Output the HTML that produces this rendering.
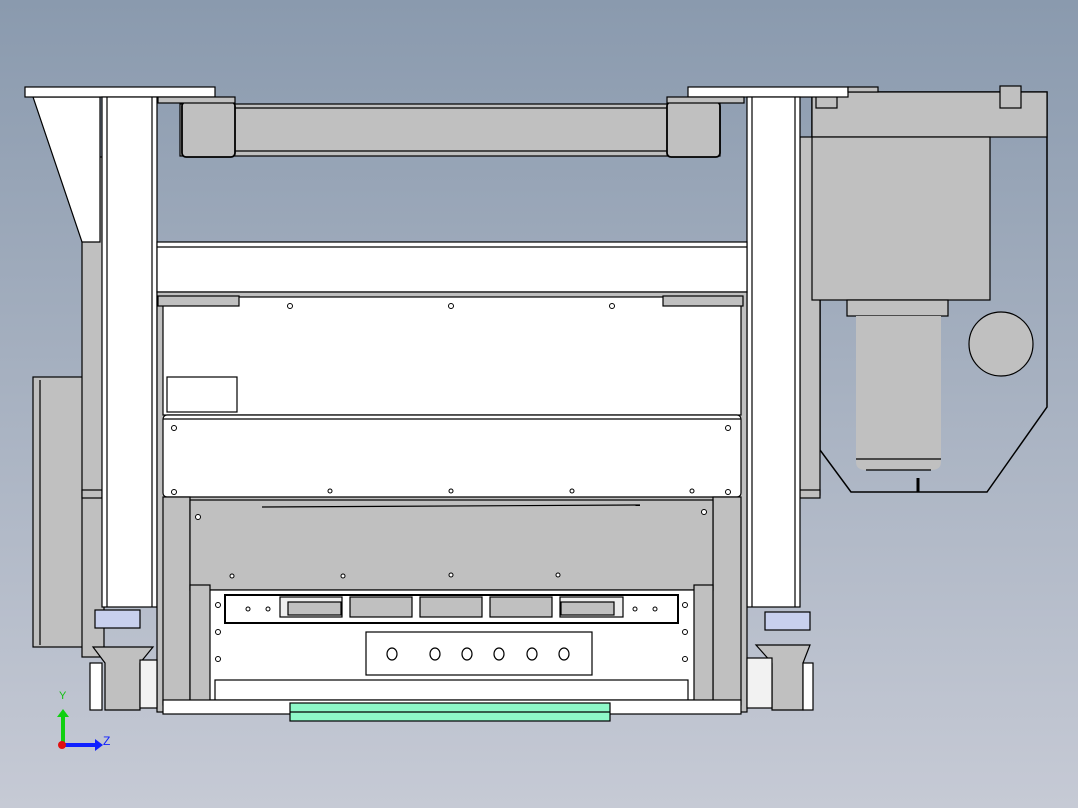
<!DOCTYPE html>
<html><head><meta charset="utf-8"><style>
html,body{margin:0;padding:0;width:1078px;height:808px;overflow:hidden}
svg{display:block}
</style></head><body>
<svg width="1078" height="808" viewBox="0 0 1078 808" xmlns="http://www.w3.org/2000/svg" font-family="Liberation Sans, sans-serif">
<defs><linearGradient id="bg" x1="0" y1="0" x2="0" y2="1"><stop offset="0" stop-color="#8a9aae"/><stop offset="1" stop-color="#c6cad5"/></linearGradient></defs>
<rect width="1078" height="808" fill="url(#bg)"/>
<g stroke="#000" stroke-width="1.2">
<polygon points="812,92 1047,92 1047,407 987,492 851,492 820,450 820,137 812,137" fill="none" stroke-width="1.5"/>
<rect x="800" y="137" width="20" height="358" fill="#c0c0c0"/>
<rect x="812" y="92" width="235" height="45" fill="#c0c0c0"/>
<rect x="1000" y="86" width="21" height="22" fill="#c0c0c0"/>
<rect x="816" y="96" width="21" height="12" fill="#c0c0c0"/>
<rect x="812" y="137" width="178" height="163" fill="#c0c0c0"/>
<rect x="847" y="300" width="101" height="16" fill="#c0c0c0"/>
<path d="M856,316 V462 Q856,470 866,470 H931 Q941,470 941,462 V316" fill="#c0c0c0" stroke="none"/>
<line x1="856" y1="459" x2="941" y2="459"/>
<line x1="866" y1="470" x2="931" y2="470"/>
<circle cx="1001" cy="344" r="32" fill="#c0c0c0"/>
<line x1="918" y1="478" x2="918" y2="492" stroke-width="3"/>
<rect x="33" y="377" width="70" height="270" fill="#c0c0c0"/>
<line x1="40" y1="380" x2="40" y2="645"/>
<rect x="82" y="157" width="22" height="500" fill="#c0c0c0"/>
<rect x="82" y="490" width="20" height="8" fill="#c0c0c0"/>
<rect x="800" y="490" width="20" height="8" fill="#c0c0c0"/>
<polygon points="33,97 100,97 100,242 82,242" fill="#fff"/>
<rect x="25" y="87" width="190" height="10" fill="#fff"/>
<rect x="688" y="87" width="160" height="10" fill="#fff"/>
<rect x="848" y="87" width="30" height="5" fill="#c0c0c0"/>
<rect x="180" y="104" width="540" height="52" fill="#c0c0c0"/>
<line x1="235" y1="108" x2="667" y2="108"/>
<line x1="235" y1="151" x2="667" y2="151"/>
<rect x="182" y="102" width="53" height="55" rx="4" fill="#c0c0c0" stroke-width="1.8"/>
<rect x="667" y="102" width="53" height="55" rx="4" fill="#c0c0c0" stroke-width="1.8"/>
<rect x="158" y="97" width="77" height="6" fill="#c0c0c0"/>
<rect x="667" y="97" width="77" height="6" fill="#c0c0c0"/>
<rect x="102" y="97" width="55" height="510" fill="#fff"/>
<line x1="107" y1="97" x2="107" y2="607"/><line x1="152" y1="97" x2="152" y2="607"/>
<rect x="747" y="97" width="53" height="510" fill="#fff"/>
<line x1="752" y1="97" x2="752" y2="607"/><line x1="795" y1="97" x2="795" y2="607"/>
<rect x="157" y="242" width="590" height="50" fill="#fff"/>
<line x1="157" y1="247" x2="747" y2="247"/>
<rect x="157" y="292" width="590" height="420" fill="#c0c0c0"/>
<rect x="163" y="297" width="578" height="118" fill="#fff"/>
<rect x="158" y="296" width="81" height="10" fill="#c0c0c0"/>
<rect x="663" y="296" width="80" height="10" fill="#c0c0c0"/>
<rect x="167" y="377" width="70" height="35" fill="#fff"/>
<rect x="163" y="415" width="578" height="82" fill="#fff" rx="4"/>
<line x1="163" y1="419" x2="741" y2="419"/>
<rect x="163" y="497" width="27" height="208" fill="#c0c0c0"/>
<rect x="713" y="497" width="28" height="208" fill="#c0c0c0"/>
<rect x="190" y="500" width="523" height="90" fill="#c0c0c0"/>
<line x1="262" y1="507" x2="640" y2="505"/>
<rect x="207" y="590" width="490" height="110" fill="#fff"/>
<rect x="190" y="585" width="20" height="120" fill="#c0c0c0"/>
<rect x="694" y="585" width="19" height="120" fill="#c0c0c0"/>
<rect x="215" y="680" width="473" height="20" fill="#fff"/>
<rect x="225" y="595" width="453" height="28" fill="#fff" stroke-width="2"/>
<rect x="280" y="597" width="62" height="20" fill="#eee"/>
<rect x="288" y="602" width="53" height="13" fill="#c0c0c0"/>
<rect x="350" y="597" width="62" height="20" fill="#c0c0c0"/>
<rect x="420" y="597" width="62" height="20" fill="#c0c0c0"/>
<rect x="490" y="597" width="62" height="20" fill="#c0c0c0"/>
<rect x="560" y="597" width="63" height="20" fill="#eee"/>
<rect x="561" y="602" width="53" height="13" fill="#c0c0c0"/>
<rect x="366" y="632" width="226" height="43" fill="#fff"/>
<g fill="none">
<ellipse cx="392" cy="654" rx="5" ry="6"/>
<ellipse cx="435" cy="654" rx="5" ry="6"/>
<ellipse cx="467" cy="654" rx="5" ry="6"/>
<ellipse cx="499" cy="654" rx="5" ry="6"/>
<ellipse cx="532" cy="654" rx="5" ry="6"/>
<ellipse cx="564" cy="654" rx="5" ry="6"/>
</g>
<rect x="163" y="700" width="578" height="14" fill="#fff"/>
<rect x="290" y="703" width="320" height="18" fill="#8ef8c8"/>
<line x1="290" y1="712" x2="610" y2="712"/>
<rect x="95" y="610" width="45" height="18" fill="#c8d0ee"/>
<rect x="765" y="612" width="45" height="18" fill="#c8d0ee"/>
<path d="M93,647 H153 L140,663 V710 H105 V663 Z" fill="#c0c0c0"/>
<rect x="90" y="663" width="12" height="47" fill="#fff"/>
<rect x="140" y="660" width="17" height="48" fill="#f2f2f2"/>
<path d="M756,645 H810 L803,663 V710 H772 V663 Z" fill="#c0c0c0"/>
<rect x="803" y="663" width="10" height="47" fill="#fff"/>
<rect x="747" y="658" width="25" height="50" fill="#f2f2f2"/>
</g>
<g fill="#fff" stroke="#000" stroke-width="1">
<circle cx="290" cy="306" r="2.5"/><circle cx="451" cy="306" r="2.5"/><circle cx="612" cy="306" r="2.5"/>
<circle cx="174" cy="428" r="2.5"/><circle cx="728" cy="428" r="2.5"/>
<circle cx="174" cy="492" r="2.5"/><circle cx="728" cy="492" r="2.5"/>
<circle cx="330" cy="491" r="2"/><circle cx="451" cy="491" r="2"/><circle cx="572" cy="491" r="2"/><circle cx="692" cy="491" r="2"/>
<circle cx="198" cy="517" r="2.5"/><circle cx="704" cy="512" r="2.5"/>
<circle cx="232" cy="576" r="2"/><circle cx="343" cy="576" r="2"/><circle cx="451" cy="575" r="2"/><circle cx="558" cy="575" r="2"/>
<circle cx="218" cy="605" r="2.5"/><circle cx="685" cy="605" r="2.5"/>
<circle cx="218" cy="632" r="2.5"/><circle cx="685" cy="632" r="2.5"/>
<circle cx="218" cy="659" r="2.5"/><circle cx="685" cy="659" r="2.5"/>
<circle cx="248" cy="609" r="2"/><circle cx="268" cy="609" r="2"/><circle cx="635" cy="609" r="2"/><circle cx="655" cy="609" r="2"/>
</g>
<path d="M62,745 L95,745" stroke="#1020ff" stroke-width="4"/>
<polygon points="95,739 103,745 95,751" fill="#1020ff"/>
<path d="M63,745 L63,716" stroke="#10d010" stroke-width="4"/>
<polygon points="57,717 63,709 69,717" fill="#10d010"/>
<circle cx="62" cy="745" r="4" fill="#e01010"/>
<text x="59" y="699" font-size="11" fill="#10c010">Y</text>
<text x="103" y="745" font-size="12" fill="#1020ff">Z</text>
</svg>
</body></html>
